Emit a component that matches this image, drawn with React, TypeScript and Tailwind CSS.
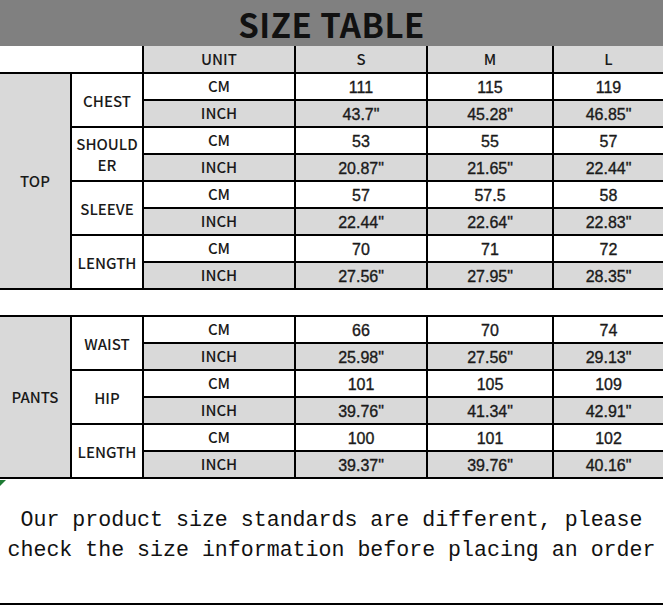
import React from "react";

type Row = { unit: string; s: string; m: string; l: string };
type Group = { name: React.ReactNode; cm: Row; inch: Row };

const topGroups: Group[] = [
  {
    name: "CHEST",
    cm: { unit: "CM", s: "111", m: "115", l: "119" },
    inch: { unit: "INCH", s: '43.7"', m: '45.28"', l: '46.85"' },
  },
  {
    name: (
      <>
        SHOULD
        <br />
        ER
      </>
    ),
    cm: { unit: "CM", s: "53", m: "55", l: "57" },
    inch: { unit: "INCH", s: '20.87"', m: '21.65"', l: '22.44"' },
  },
  {
    name: "SLEEVE",
    cm: { unit: "CM", s: "57", m: "57.5", l: "58" },
    inch: { unit: "INCH", s: '22.44"', m: '22.64"', l: '22.83"' },
  },
  {
    name: "LENGTH",
    cm: { unit: "CM", s: "70", m: "71", l: "72" },
    inch: { unit: "INCH", s: '27.56"', m: '27.95"', l: '28.35"' },
  },
];

const pantsGroups: Group[] = [
  {
    name: "WAIST",
    cm: { unit: "CM", s: "66", m: "70", l: "74" },
    inch: { unit: "INCH", s: '25.98"', m: '27.56"', l: '29.13"' },
  },
  {
    name: "HIP",
    cm: { unit: "CM", s: "101", m: "105", l: "109" },
    inch: { unit: "INCH", s: '39.76"', m: '41.34"', l: '42.91"' },
  },
  {
    name: "LENGTH",
    cm: { unit: "CM", s: "100", m: "101", l: "102" },
    inch: { unit: "INCH", s: '39.37"', m: '39.76"', l: '40.16"' },
  },
];

const label = "font-['Noto_Sans_CJK_SC','Noto_Sans',sans-serif] font-medium text-[15px] text-[#1a1a1a]";
const num = "font-['Liberation_Sans',Arial,sans-serif] text-[16px] text-[#1a1a1a] pt-[2px] [-webkit-text-stroke:0.35px_#1a1a1a]";
const cell = "flex items-center justify-center border-black";

function DataRow({ row, gray }: { row: Row; gray: boolean }) {
  const bg = gray ? "bg-[#d9d9d9]" : "bg-white";
  return (
    <>
      <div className={`${cell} ${bg} ${label} border-r-2 border-b-2`}>{row.unit}</div>
      <div className={`${cell} ${bg} ${num} border-r-2 border-b-2`}>{row.s}</div>
      <div className={`${cell} ${bg} ${num} border-r-2 border-b-2`}>{row.m}</div>
      <div className={`${cell} ${bg} ${num} border-b-2`}>{row.l}</div>
    </>
  );
}

function Section({ title, groups, span }: { title: string; groups: Group[]; span: string }) {
  return (
    <>
      <div className={`${cell} ${span} bg-[#d9d9d9] ${label} border-r-2 border-b-2`}>{title}</div>
      {groups.map((g, i) => (
        <React.Fragment key={i}>
          <div className={`${cell} row-span-2 bg-white ${label} text-center leading-[21px] border-r-2 border-b-2`}>
            {g.name}
          </div>
          <DataRow row={g.cm} gray={false} />
          <DataRow row={g.inch} gray={true} />
        </React.Fragment>
      ))}
    </>
  );
}

export default function App() {
  return (
    <div className="w-[663px] h-[608px] bg-white overflow-hidden flex flex-col">
      <div className="h-[46px] shrink-0 bg-[#808080] flex items-center justify-center">
        <span className="font-['Noto_Sans_CJK_SC','Noto_Sans',sans-serif] font-semibold text-[33px] leading-[46px] text-[#111] tracking-[0.5px] pt-[1px]">
          SIZE TABLE
        </span>
      </div>

      <div className="relative grid grid-cols-[72px_72px_152px_132px_126px_109px] grid-rows-[28px_repeat(8,27px)_27px_repeat(6,27px)]">
        <div className={`${cell} col-span-2 bg-white border-r-2 border-b-2`} />
        <div className={`${cell} bg-[#d9d9d9] ${label} border-r-2 border-b-2`}>UNIT</div>
        <div className={`${cell} bg-[#d9d9d9] ${label} border-r-2 border-b-2`}>S</div>
        <div className={`${cell} bg-[#d9d9d9] ${label} border-r-2 border-b-2`}>M</div>
        <div className={`${cell} bg-[#d9d9d9] ${label} border-b-2`}>L</div>

        <Section title="TOP" groups={topGroups} span="row-span-8" />

        <div className="col-span-6 bg-white border-b-2 border-black" />

        <Section title="PANTS" groups={pantsGroups} span="row-span-6" />

        <svg className="absolute left-0 -bottom-[7px]" width="6" height="6" viewBox="0 0 6 6">
          <polygon points="0,0 6,0 0,6" fill="#1e7b34" />
        </svg>
      </div>

      <div className="flex-1 flex flex-col items-center pt-[26px] font-['Liberation_Mono','Courier_New',monospace] text-[21.6px] leading-[30px] text-[#111] whitespace-pre">
        <p>Our product size standards are different, please</p>
        <p>check the size information before placing an order</p>
      </div>

      <div className="h-[2px] shrink-0 bg-black mb-[3px]" />
    </div>
  );
}
